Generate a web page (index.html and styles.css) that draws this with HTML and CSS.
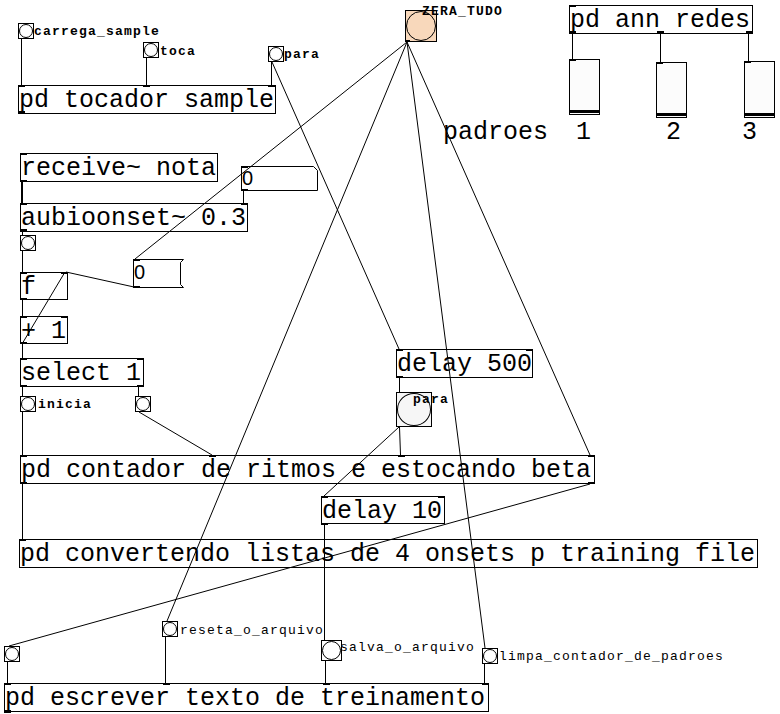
FILE: index.html
```html
<!DOCTYPE html>
<html>
<head>
<meta charset="utf-8">
<link rel="stylesheet" href="styles.css">
</head>
<body>
<div class="canvas">
  <div class="obj o-tocador">pd tocador sample</div>
  <div class="obj o-ann">pd ann redes</div>
  <div class="obj o-receive">receive~ nota</div>
  <div class="obj o-aubio">aubioonset~ 0.3</div>
  <div class="obj o-f">f</div>
  <div class="obj o-plus">+ 1</div>
  <div class="obj o-select">select 1</div>
  <div class="obj o-delay500">delay 500</div>
  <div class="obj o-contador">pd contador de ritmos e estocando beta</div>
  <div class="obj o-delay10">delay 10</div>
  <div class="obj o-convert">pd convertendo listas de 4 onsets p training file</div>
  <div class="obj o-escrever">pd escrever texto de treinamento</div>

  <div class="nbox nb1">
    <svg class="nshape" width="77" height="25"><polygon points="0.5,0.5 72.5,0.5 76.5,4.5 76.5,24.5 0.5,24.5"/></svg>
    <span class="ntext">0</span>
  </div>
  <div class="nbox nb2">
    <svg class="nshape" width="51" height="29"><polyline points="50.5,0.5 0.5,0.5 0.5,28.5 50.5,28.5"/><polyline points="50.5,0.5 47.5,3.5 47.5,25.5 50.5,28.5"/></svg>
    <span class="ntext">0</span>
  </div>

  <div class="bng b-carrega"></div>
  <div class="bng b-toca"></div>
  <div class="bng b-paratop"></div>
  <div class="bng b-zera"></div>
  <div class="bng b-aubio"></div>
  <div class="bng b-inicia"></div>
  <div class="bng b-selr"></div>
  <div class="bng b-parabig"></div>
  <div class="bng b-empty"></div>
  <div class="bng b-reseta"></div>
  <div class="bng b-salva"></div>
  <div class="bng b-limpa"></div>

  <div class="vsl s1"><span class="knob"></span></div>
  <div class="vsl s2"><span class="knob"></span></div>
  <div class="vsl s3"><span class="knob"></span></div>

  <span class="cmt c-padroes">padroes</span>
  <span class="cmt c-1">1</span>
  <span class="cmt c-2">2</span>
  <span class="cmt c-3">3</span>

  <span class="lbl bold l-carrega">carrega_sample</span>
  <span class="lbl bold l-toca">toca</span>
  <span class="lbl bold l-paratop">para</span>
  <span class="lbl bold l-zera">ZERA_TUDO</span>
  <span class="lbl bold l-inicia">inicia</span>
  <span class="lbl bold l-parabig">para</span>
  <span class="lbl l-reseta">reseta_o_arquivo</span>
  <span class="lbl l-salva">salva_o_arquivo</span>
  <span class="lbl l-limpa">limpa_contador_de_padroes</span>

  <svg class="wires" width="780" height="714" viewBox="0 0 780 714">
    <g class="sig">
      <line x1="22" y1="181" x2="22" y2="203"/>
    </g>
    <g class="ctl">
      <line x1="21.5" y1="39" x2="21.5" y2="85"/>
      <line x1="146.5" y1="58" x2="146.5" y2="85"/>
      <line x1="271.5" y1="62" x2="271.5" y2="85"/>
      <line x1="272" y1="62" x2="399" y2="349"/>
      <line x1="572.5" y1="33" x2="572.5" y2="59"/>
      <line x1="660.5" y1="33" x2="660.5" y2="62"/>
      <line x1="748.5" y1="33" x2="748.5" y2="61"/>
      <line x1="407" y1="42" x2="135" y2="259"/>
      <line x1="407" y1="42" x2="167" y2="621"/>
      <line x1="407" y1="42" x2="485" y2="648"/>
      <line x1="407" y1="42" x2="590" y2="455"/>
      <line x1="243.5" y1="191" x2="243.5" y2="203"/>
      <line x1="22.5" y1="231" x2="22.5" y2="235"/>
      <line x1="22.5" y1="251" x2="22.5" y2="272"/>
      <line x1="22.5" y1="300" x2="22.5" y2="316"/>
      <line x1="22" y1="344" x2="65" y2="272"/>
      <line x1="134" y1="287" x2="66" y2="272"/>
      <line x1="22.5" y1="344" x2="22.5" y2="358"/>
      <line x1="22.5" y1="387" x2="22.5" y2="396"/>
      <line x1="138.5" y1="387" x2="138.5" y2="396"/>
      <line x1="22.5" y1="412" x2="22.5" y2="455"/>
      <line x1="139" y1="412" x2="212" y2="455"/>
      <line x1="399.5" y1="378" x2="399.5" y2="392"/>
      <line x1="399.5" y1="427" x2="400.5" y2="455"/>
      <line x1="399" y1="427" x2="324" y2="496"/>
      <line x1="22.5" y1="484" x2="22.5" y2="539"/>
      <line x1="590" y1="484" x2="9" y2="646"/>
      <line x1="324.5" y1="524" x2="324.5" y2="640"/>
      <line x1="7.5" y1="662" x2="7.5" y2="683"/>
      <line x1="165.5" y1="637" x2="165.5" y2="683"/>
      <line x1="325.5" y1="661" x2="325.5" y2="683"/>
      <line x1="484.5" y1="664" x2="484.5" y2="683"/>
    </g>
    <g class="ports">
      <rect x="18" y="85" width="7" height="2"/><rect x="143" y="85" width="7" height="2"/><rect x="268" y="85" width="7" height="2"/><rect x="18" y="111" width="7" height="3"/>
      <rect x="569" y="5" width="7" height="2"/><rect x="569" y="31" width="7" height="2"/><rect x="657" y="31" width="7" height="2"/><rect x="746" y="31" width="7" height="2"/>
      <rect x="20" y="153" width="7" height="2"/><rect x="20" y="180" width="7" height="2"/>
      <rect x="20" y="203" width="7" height="2"/><rect x="241" y="203" width="7" height="2"/><rect x="20" y="229" width="7" height="2"/>
      <rect x="241" y="166" width="7" height="2"/><rect x="241" y="189" width="7" height="2"/>
      <rect x="133" y="259" width="7" height="2"/><rect x="133" y="286" width="7" height="2"/>
      <rect x="20" y="272" width="7" height="2"/><rect x="61" y="272" width="7" height="2"/><rect x="20" y="298" width="7" height="2"/>
      <rect x="20" y="316" width="7" height="2"/><rect x="61" y="316" width="7" height="2"/><rect x="20" y="342" width="7" height="2"/>
      <rect x="20" y="358" width="7" height="2"/><rect x="137" y="358" width="7" height="2"/><rect x="20" y="385" width="7" height="2"/><rect x="137" y="385" width="7" height="2"/>
      <rect x="396" y="349" width="7" height="2"/><rect x="526" y="349" width="7" height="2"/><rect x="396" y="376" width="7" height="2"/>
      <rect x="20" y="455" width="7" height="2"/><rect x="209" y="455" width="7" height="2"/><rect x="398" y="455" width="7" height="2"/><rect x="588" y="455" width="7" height="2"/><rect x="20" y="482" width="7" height="2"/><rect x="588" y="482" width="7" height="2"/>
      <rect x="321" y="496" width="7" height="2"/><rect x="438" y="496" width="7" height="2"/><rect x="321" y="523" width="7" height="2"/>
      <rect x="19" y="539" width="7" height="2"/>
      <rect x="4" y="683" width="7" height="2"/><rect x="163" y="683" width="7" height="2"/><rect x="323" y="683" width="7" height="2"/><rect x="482" y="683" width="7" height="2"/><rect x="4" y="710" width="7" height="3"/>
      <rect x="569" y="59" width="7" height="2"/><rect x="656" y="62" width="7" height="2"/><rect x="744" y="61" width="7" height="2"/>
      <rect x="405" y="40" width="5" height="2"/>
    </g>
  </svg>
</div>
</body>
</html>
```
FILE: styles.css
```css
html, body {
  margin: 0;
  padding: 0;
  background: #ffffff;
}

.canvas {
  position: relative;
  width: 780px;
  height: 714px;
  overflow: hidden;
  background: #ffffff;
}

/* text objects */
.obj {
  position: absolute;
  box-sizing: border-box;
  height: 29px;
  border: 1px solid #000;
  background: #fff;
  font-family: "Liberation Mono", "DejaVu Sans Mono", monospace;
  font-size: 25px;
  line-height: 27px;
  padding-top: 1px;
  white-space: nowrap;
  color: #000;
}

.o-tocador  { left: 18px;  top: 85px;  width: 258px; }
.o-ann      { left: 569px; top: 5px;   width: 184px; }
.o-receive  { left: 20px;  top: 153px; width: 198px; }
.o-aubio    { left: 20px;  top: 203px; width: 228px; }
.o-f        { left: 20px;  top: 272px; width: 48px;  height: 28px; }
.o-plus     { left: 20px;  top: 316px; width: 48px;  height: 28px; }
.o-select   { left: 20px;  top: 358px; width: 124px; }
.o-delay500 { left: 396px; top: 349px; width: 137px; }
.o-contador { left: 20px;  top: 455px; width: 575px; }
.o-delay10  { left: 321px; top: 496px; width: 124px; height: 28px; }
.o-convert  { left: 19px;  top: 539px; width: 739px; }
.o-escrever { left: 4px;   top: 683px; width: 485px; }

/* number boxes */
.nbox {
  position: absolute;
  box-sizing: border-box;
  background: #fff;
}
.nshape {
  position: absolute;
  left: 0;
  top: 0;
  fill: #fff;
  stroke: #000;
  stroke-width: 1;
}
.ntext {
  position: relative;
  display: block;
  font-family: "Liberation Sans", Arial, sans-serif;
  font-size: 20px;
  line-height: 20px;
  padding-left: 1px;
  color: #000;
}
.nb1 { left: 241px; top: 166px; width: 77px; height: 25px; }
.nb1 .ntext { padding-top: 2px; }
.nb2 { left: 133px; top: 259px; width: 51px; height: 29px; }
.nb2 .ntext { padding-top: 3px; }

/* bangs */
.bng {
  position: absolute;
  box-sizing: border-box;
  width: 16px;
  height: 16px;
  border: 1px solid #000;
  background: #fff;
}
.bng::after {
  content: "";
  position: absolute;
  left: 0;
  top: 0;
  right: 0;
  bottom: 0;
  border: 1px solid #000;
  border-radius: 50%;
}
.b-carrega { left: 18px;  top: 23px; }
.b-toca    { left: 143px; top: 42px; }
.b-paratop { left: 268px; top: 46px; }
.b-zera    { left: 405px; top: 10px; width: 32px; height: 32px; background: #f8d8bb; }
.b-aubio   { left: 20px;  top: 235px; }
.b-inicia  { left: 20px;  top: 396px; }
.b-selr    { left: 135px; top: 396px; }
.b-parabig { left: 396px; top: 392px; width: 36px; height: 35px; background: #f6f6f6; }
.b-empty   { left: 4px;   top: 646px; }
.b-reseta  { left: 162px; top: 621px; }
.b-salva   { left: 321px; top: 640px; width: 21px; height: 21px; }
.b-limpa   { left: 482px; top: 648px; }

/* vertical sliders */
.vsl {
  position: absolute;
  box-sizing: border-box;
  width: 31px;
  border: 1px solid #000;
  background: #fcfcfc;
}
.knob {
  position: absolute;
  left: 0;
  right: 0;
  bottom: 1px;
  height: 3px;
  background: #000;
}
.s1 { left: 569px; top: 59px; height: 56px; }
.s2 { left: 656px; top: 62px; height: 56px; }
.s3 { left: 744px; top: 61px; height: 57px; }

/* comments */
.cmt {
  position: absolute;
  font-family: "Liberation Mono", "DejaVu Sans Mono", monospace;
  font-size: 25px;
  line-height: 27px;
  white-space: nowrap;
  color: #000;
}
.c-padroes { left: 443px; top: 119px; }
.c-1 { left: 576px; top: 119px; }
.c-2 { left: 666px; top: 119px; }
.c-3 { left: 742px; top: 119px; }

/* labels */
.lbl {
  position: absolute;
  font-family: "Liberation Mono", "DejaVu Sans Mono", monospace;
  font-size: 13px;
  line-height: 13px;
  letter-spacing: 1.2px;
  white-space: nowrap;
  color: #000;
}
.lbl.bold { font-weight: bold; }
.l-carrega { left: 34px;  top: 25px; }
.l-toca    { left: 160px; top: 45px; }
.l-paratop { left: 284px; top: 48px; }
.l-zera    { left: 422px; top: 5px; }
.l-inicia  { left: 38px;  top: 398px; }
.l-parabig { left: 413px; top: 393px; }
.l-reseta  { left: 180px; top: 624px; }
.l-salva   { left: 340px; top: 641px; }
.l-limpa   { left: 499px; top: 650px; }

/* wires overlay */
.wires {
  position: absolute;
  left: 0;
  top: 0;
  pointer-events: none;
}
.wires .ctl line {
  stroke: #000;
  stroke-width: 1;
}
.wires .sig line {
  stroke: #000;
  stroke-width: 2;
}
.wires .ports rect {
  fill: #000;
}
```
